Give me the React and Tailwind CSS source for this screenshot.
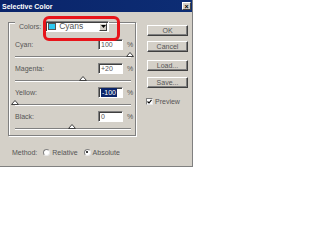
import React from "react";

const Btn = ({ children, className = "" }) => (
  <div
    className={`w-[41px] h-[11px] flex items-center justify-center bg-[#d4d0c8] border border-t-white border-l-white border-r-[#404040] border-b-[#404040] shadow-[inset_-1px_-1px_0_#808080] text-[7px] text-[#555] leading-none ${className}`}
  >
    {children}
  </div>
);

const Slider = ({ pos }) => (
  <div className="relative h-[13px] mr-[4px]">
    <div className="absolute left-0 right-0 top-[6px] h-[2px] border-t border-t-[#808080] border-b border-b-white" />
    <svg
      className="absolute top-[2px]"
      style={{ left: `${pos - 4}px` }}
      width="8"
      height="5"
      viewBox="0 0 8 5"
    >
      <polygon points="4,0.5 7.5,4.5 0.5,4.5" fill="#fff" stroke="#404040" strokeWidth="1" />
    </svg>
  </div>
);

const Row = ({ label, value, selected, pos }) => (
  <div className="flex flex-col">
    <div className="flex items-center h-[11px]">
      <div className="w-[83px] text-[7px] text-[#555] leading-none">{label}</div>
      <div className="w-[25px] h-[11px] bg-white border border-t-[#808080] border-l-[#808080] border-r-white border-b-white shadow-[inset_1px_1px_0_#404040] flex items-center pl-[2px]">
        {selected ? (
          <span className="bg-[#0a246a] text-white text-[7px] leading-none px-[1px] py-[1px]">{value}</span>
        ) : (
          <span className="text-[#555] text-[7px] leading-none">{value}</span>
        )}
      </div>
      <div className="ml-[4px] text-[7px] text-[#555] leading-none">%</div>
    </div>
    <Slider pos={pos} />
  </div>
);

const Radio = ({ checked }) => (
  <div className="w-[7px] h-[7px] rounded-full bg-white border border-t-[#808080] border-l-[#808080] border-r-[#e8e8e8] border-b-[#e8e8e8] flex items-center justify-center">
    {checked && <div className="w-[2px] h-[2px] rounded-full bg-black" />}
  </div>
);

export default function App() {
  return (
    <div className="w-[320px] h-[248px] bg-white font-['Liberation_Sans',Arial,sans-serif]">
      <div className="relative w-[193px] h-[167px] bg-[#d4d0c8] border-r border-b border-r-[#808080] border-b-[#808080] flex flex-col">
        <div className="h-[12px] bg-gradient-to-r from-[#0a246a] to-[#0d2d74] flex items-center justify-between pl-[2px] pr-[1px]">
          <span className="text-white font-bold text-[7px] leading-none">Selective Color</span>
          <div className="w-[9px] h-[8px] bg-[#d4d0c8] border border-t-white border-l-white border-r-[#404040] border-b-[#404040] flex items-center justify-center text-[7px] leading-none text-black font-bold">
            ×
          </div>
        </div>
        <div className="flex flex-row">
          <div className="flex flex-col pl-[8px] pt-[10px]">
            <div className="w-[128px] h-[114px] border border-[#808080] shadow-[inset_1px_1px_0_#fff,1px_1px_0_#fff] pl-[6px] flex flex-col">
              <div className="flex items-center h-[11px] -mt-[2px]">
                <div className="bg-[#d4d0c8] pl-[4px] pr-[3px] h-[11px] flex items-center text-[7px] text-[#555] leading-none">
                  Colors:
                </div>
                <div className="ml-[1px] w-[64px] h-[11px] bg-white border border-t-[#808080] border-l-[#808080] border-r-white border-b-white shadow-[inset_1px_1px_0_#404040] flex items-center pl-[2px]">
                  <div className="w-[8px] h-[7px] bg-[#2ec8f0] border border-[#555]" />
                  <span className="ml-[3px] text-[8.5px] text-[#555] leading-none">Cyans</span>
                  <div className="ml-auto mr-[1px] w-[8px] h-[8px] bg-[#d4d0c8] border border-t-white border-l-white border-r-[#404040] border-b-[#404040] flex items-center justify-center">
                    <svg width="5" height="3" viewBox="0 0 5 3">
                      <polygon points="0,0 5,0 2.5,3" fill="#000" />
                    </svg>
                  </div>
                </div>
              </div>
              <div className="mt-[7px] flex flex-col">
                <Row label="Cyan:" value="100" pos={115} />
                <Row label="Magenta:" value="+20" pos={68} />
                <Row label="Yellow:" value="-100" selected pos={0} />
                <Row label="Black:" value="0" pos={57} />
              </div>
            </div>
            <div className="flex items-center mt-[11px] ml-[4px] h-[10px] text-[7px] text-[#555] leading-none">
              <span>Method:</span>
              <div className="ml-[6px]"><Radio /></div>
              <span className="ml-[2px]">Relative</span>
              <div className="ml-[6px]"><Radio checked /></div>
              <span className="ml-[2px]">Absolute</span>
            </div>
          </div>
          <div className="flex flex-col ml-[11px] pt-[13px]">
            <Btn>OK</Btn>
            <Btn className="mt-[5px]">Cancel</Btn>
            <Btn className="mt-[8px]">Load...</Btn>
            <Btn className="mt-[6px]">Save...</Btn>
            <div className="flex items-center mt-[10px] -ml-[1px]">
              <div className="w-[7px] h-[7px] bg-white border border-t-[#808080] border-l-[#808080] border-r-[#e8e8e8] border-b-[#e8e8e8] flex items-center justify-center">
                <svg width="5" height="5" viewBox="0 0 5 5">
                  <polyline points="0.5,2.5 2,4 4.5,0.8" fill="none" stroke="#000" strokeWidth="1.1" />
                </svg>
              </div>
              <span className="ml-[2px] text-[7px] text-[#555] leading-none">Preview</span>
            </div>
          </div>
        </div>
        <div className="absolute left-[43px] top-[16px] w-[77px] h-[25px] border-[3px] border-[#e8141a] rounded-[6px]" />
      </div>
    </div>
  );
}
